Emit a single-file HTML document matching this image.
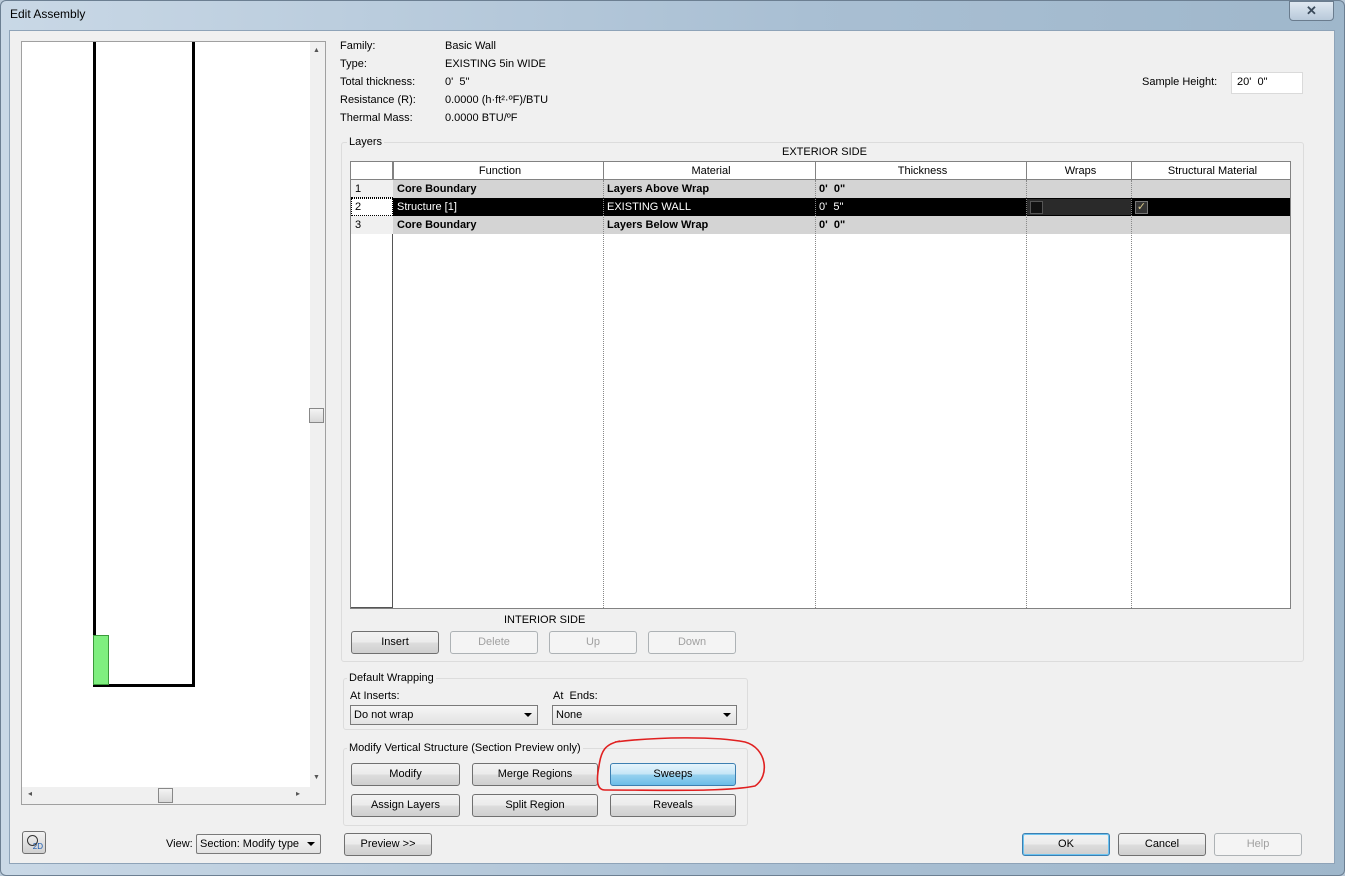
<!DOCTYPE html>
<html><head><style>
*{box-sizing:border-box;margin:0;padding:0}
body{width:1345px;height:876px;position:relative;overflow:hidden;font-family:"Liberation Sans",sans-serif;font-size:11px;color:#000;background:#b9c9d8}
.a{position:absolute}
.btn{position:absolute;height:23px;border:1px solid #707070;border-radius:3px;background:linear-gradient(#f2f2f2,#ebebeb 50%,#dddddd 51%,#cfcfcf);text-align:center;line-height:21px;font-size:11px}
.dis{border-color:#adb2b5;background:#f4f4f4;color:#a0a0a0}
.grp{position:absolute;border:1px solid #dcdcdc;border-radius:3px}
.lbl{position:absolute;font-size:11px}
.cell{position:absolute;height:18px;line-height:18px;padding-left:4px;white-space:nowrap}
.vl{position:absolute;width:0;border-left:1px dotted #888}
.combo{position:absolute;height:20px;border:1px solid #7a7a7a;background:linear-gradient(#f6f6f6,#e2e2e2);line-height:18px;padding-left:3px;font-size:11px}
.combo:after{content:"";position:absolute;right:5px;top:7px;border-left:4px solid transparent;border-right:4px solid transparent;border-top:4px solid #000}
</style></head><body>
<div class="a" style="left:0;top:0;width:1345px;height:876px;background:linear-gradient(90deg,#c9d8e6,#a9bfd3 60%,#9fb7cb);border:1px solid #6c7f92;border-radius:6px"></div>
<div class="a" style="left:10px;top:7px;font-size:12px">Edit Assembly</div>
<div class="a" style="left:1289px;top:1px;width:45px;height:20px;border:1px solid #6a7c8e;border-radius:0 0 4px 4px;background:linear-gradient(#dfe8f1,#b8c9da);text-align:center;line-height:18px;font-size:13px;font-weight:bold;color:#3a4a5a">✕</div>
<div class="a" style="left:9px;top:30px;width:1326px;height:834px;background:#f0f0f0;border:1px solid #8ea3b8"></div>

<!-- preview -->
<div class="a" style="left:21px;top:41px;width:305px;height:764px;border:1px solid #a0a0a0;background:#fff"></div>
<div class="a" style="left:310px;top:42px;width:15px;height:745px;background:#f0f0f0"></div>
<div class="a" style="left:313px;top:47px;font-size:7px;color:#555">▲</div>
<div class="a" style="left:313px;top:774px;font-size:7px;color:#555">▼</div>
<div class="a" style="left:309px;top:408px;width:15px;height:15px;border:1px solid #888;background:linear-gradient(#f4f4f4,#d8d8d8)"></div>
<div class="a" style="left:22px;top:787px;width:303px;height:17px;background:#f0f0f0"></div>
<div class="a" style="left:28px;top:789px;font-size:8px;color:#555">◂</div>
<div class="a" style="left:296px;top:789px;font-size:8px;color:#555">▸</div>
<div class="a" style="left:158px;top:788px;width:15px;height:15px;border:1px solid #888;background:linear-gradient(#f4f4f4,#d8d8d8)"></div>
<div class="a" style="left:93px;top:42px;width:3px;height:644px;background:#000"></div>
<div class="a" style="left:192px;top:42px;width:3px;height:644px;background:#000"></div>
<div class="a" style="left:93px;top:684px;width:102px;height:3px;background:#000"></div>
<div class="a" style="left:93px;top:635px;width:16px;height:50px;background:#7fef7f;border:1px solid #3c9a3c"></div>

<!-- properties -->
<div class="lbl" style="left:340px;top:40px">Family:</div><div class="lbl" style="left:445px;top:40px">Basic Wall</div>
<div class="lbl" style="left:340px;top:58px">Type:</div><div class="lbl" style="left:445px;top:58px">EXISTING 5in WIDE</div>
<div class="lbl" style="left:340px;top:76px">Total thickness:</div><div class="lbl" style="left:445px;top:76px">0'&nbsp; 5"</div>
<div class="lbl" style="left:340px;top:94px">Resistance (R):</div><div class="lbl" style="left:445px;top:94px">0.0000 (h·ft²·ºF)/BTU</div>
<div class="lbl" style="left:340px;top:112px">Thermal Mass:</div><div class="lbl" style="left:445px;top:112px">0.0000 BTU/ºF</div>
<div class="lbl" style="left:1142px;top:76px">Sample Height:</div>
<div class="a" style="left:1231px;top:72px;width:72px;height:22px;background:#fff;border:1px solid #dadada;padding:3px 5px">20'&nbsp; 0"</div>

<!-- layers group -->
<div class="grp" style="left:341px;top:142px;width:963px;height:520px"></div>
<div class="lbl" style="left:347px;top:136px;background:#f0f0f0;padding:0 2px">Layers</div>
<div class="lbl" style="left:782px;top:146px">EXTERIOR SIDE</div>
<div class="a" style="left:350px;top:161px;width:941px;height:448px;background:#fff;border:1px solid #828282"></div>
<div class="a" style="left:351px;top:162px;width:939px;height:18px;background:#fff;border-bottom:1px solid #828282"></div>
<div class="a" style="left:351px;top:162px;width:42px;height:446px;border-right:1px solid #828282"></div>
<div class="a" style="left:351px;top:180px;width:42px;height:428px;border-right:1px solid #555;border-bottom:1px solid #555"></div>
<div class="a" style="left:393px;top:180px;width:897px;height:18px;background:#d4d4d4"></div>
<div class="a" style="left:351px;top:198px;width:939px;height:18px;background:#000"></div>
<div class="a" style="left:393px;top:216px;width:897px;height:18px;background:#d4d4d4"></div>
<div class="a" style="left:351px;top:180px;width:42px;height:54px;background:#f0f0f0"></div>
<div class="a" style="left:351px;top:197px;width:42px;height:1px;border-top:1px dotted #000"></div>
<div class="a" style="left:351px;top:215px;width:42px;height:1px;border-top:1px dotted #000"></div>
<div class="a" style="left:351px;top:198px;width:42px;height:18px;background:#fff;border:1px dotted #000"></div>
<div class="vl" style="left:603px;top:180px;height:428px"></div>
<div class="vl" style="left:815px;top:180px;height:428px"></div>
<div class="vl" style="left:1026px;top:180px;height:428px"></div>
<div class="vl" style="left:1131px;top:180px;height:428px"></div>
<div class="a" style="left:603px;top:162px;height:18px;border-left:1px solid #828282"></div>
<div class="a" style="left:815px;top:162px;height:18px;border-left:1px solid #828282"></div>
<div class="a" style="left:1026px;top:162px;height:18px;border-left:1px solid #828282"></div>
<div class="a" style="left:1131px;top:162px;height:18px;border-left:1px solid #828282"></div>
<div class="a" style="left:393px;top:162px;height:18px;border-left:1px solid #828282"></div>
<div class="cell" style="left:393px;top:162px;width:210px;text-align:center">Function</div>
<div class="cell" style="left:603px;top:162px;width:212px;text-align:center">Material</div>
<div class="cell" style="left:815px;top:162px;width:211px;text-align:center">Thickness</div>
<div class="cell" style="left:1026px;top:162px;width:105px;text-align:center">Wraps</div>
<div class="cell" style="left:1131px;top:162px;width:159px;text-align:center">Structural Material</div>
<div class="cell" style="left:351px;top:180px">1</div>
<div class="cell" style="left:351px;top:198px">2</div>
<div class="cell" style="left:351px;top:216px">3</div>
<div class="cell" style="left:393px;top:180px;font-weight:bold">Core Boundary</div>
<div class="cell" style="left:603px;top:180px;font-weight:bold">Layers Above Wrap</div>
<div class="cell" style="left:815px;top:180px;font-weight:bold">0'&nbsp; 0"</div>
<div class="cell" style="left:393px;top:198px;color:#fff">Structure [1]</div>
<div class="cell" style="left:603px;top:198px;color:#fff">EXISTING WALL</div>
<div class="cell" style="left:815px;top:198px;color:#fff">0'&nbsp; 5"</div>
<div class="a" style="left:1027px;top:199px;width:104px;height:16px;background:#2a2a2a"></div>
<div class="a" style="left:1030px;top:201px;width:13px;height:13px;border:1px solid #555;background:#111"></div>
<div class="a" style="left:1135px;top:201px;width:13px;height:13px;border:1px solid #777;background:#333;color:#d9c98a;font-size:11px;line-height:11px;text-align:center">✓</div>
<div class="cell" style="left:393px;top:216px;font-weight:bold">Core Boundary</div>
<div class="cell" style="left:603px;top:216px;font-weight:bold">Layers Below Wrap</div>
<div class="cell" style="left:815px;top:216px;font-weight:bold">0'&nbsp; 0"</div>
<div class="lbl" style="left:504px;top:614px">INTERIOR SIDE</div>
<div class="btn" style="left:351px;top:631px;width:88px">Insert</div>
<div class="btn dis" style="left:450px;top:631px;width:88px">Delete</div>
<div class="btn dis" style="left:549px;top:631px;width:88px">Up</div>
<div class="btn dis" style="left:648px;top:631px;width:88px">Down</div>

<!-- default wrapping -->
<div class="grp" style="left:343px;top:678px;width:405px;height:52px"></div>
<div class="lbl" style="left:347px;top:672px;background:#f0f0f0;padding:0 2px">Default Wrapping</div>
<div class="lbl" style="left:350px;top:690px">At Inserts:</div>
<div class="lbl" style="left:553px;top:690px">At&nbsp; Ends:</div>
<div class="combo" style="left:350px;top:705px;width:188px">Do not wrap</div>
<div class="combo" style="left:552px;top:705px;width:185px">None</div>

<!-- modify vertical -->
<div class="grp" style="left:343px;top:748px;width:405px;height:78px"></div>
<div class="lbl" style="left:347px;top:742px;background:#f0f0f0;padding:0 2px">Modify Vertical Structure (Section Preview only)</div>
<div class="btn" style="left:351px;top:763px;width:109px">Modify</div>
<div class="btn" style="left:472px;top:763px;width:126px">Merge Regions</div>
<div class="btn" style="left:610px;top:763px;width:126px;border-color:#3c7fb1;background:linear-gradient(#e5f4fc,#c4e5f6 50%,#98d1ef 51%,#6cbde8)">Sweeps</div>
<div class="btn" style="left:351px;top:794px;width:109px">Assign Layers</div>
<div class="btn" style="left:472px;top:794px;width:126px">Split Region</div>
<div class="btn" style="left:610px;top:794px;width:126px">Reveals</div>
<svg class="a" style="left:595px;top:736px" width="175" height="60" viewBox="0 0 175 60"><path d="M20 6 C60 1 120 0 150 6 C172 12 175 40 160 50 C130 56 70 54 10 54 C2 54 1 45 4 30 C6 15 10 8 25 5" fill="none" stroke="#e02020" stroke-width="1.6"/></svg>

<!-- bottom -->
<div class="a" style="left:22px;top:831px;width:24px;height:23px;border:1px solid #707070;border-radius:3px;background:linear-gradient(#f2f2f2,#d0d0d0);font-size:8px;color:#1a5ab0;text-align:right;padding:11px 2px 0 0;line-height:8px">2D</div>
<div class="a" style="left:27px;top:835px;width:11px;height:11px;border:1.5px solid #333;border-radius:50%"></div>
<div class="lbl" style="left:166px;top:838px">View:</div>
<div class="combo" style="left:196px;top:834px;width:125px;border-radius:2px">Section: Modify type</div>
<div class="btn" style="left:344px;top:833px;width:88px">Preview &gt;&gt;</div>
<div class="btn" style="left:1022px;top:833px;width:88px;border-color:#3c7fb1;box-shadow:inset 0 0 0 1px #6cc3f0">OK</div>
<div class="btn" style="left:1118px;top:833px;width:88px">Cancel</div>
<div class="btn dis" style="left:1214px;top:833px;width:88px">Help</div>
</body></html>
